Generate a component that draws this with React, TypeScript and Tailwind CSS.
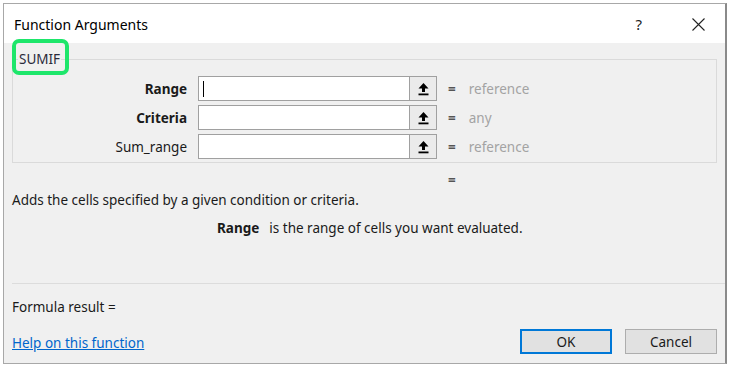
import React from "react";

function UploadIcon() {
  return (
    <svg width="13" height="14" viewBox="0 0 13 14">
      <path d="M6.5 1 L11.5 6.5 L8 6.5 L8 10 L5 10 L5 6.5 L1.5 6.5 Z" fill="#000" />
      <rect x="1.5" y="11.5" width="10" height="1.8" fill="#000" />
    </svg>
  );
}

function ArgRow({ label, bold, hint, caret }: { label: string; bold?: boolean; hint: string; caret?: boolean }) {
  return (
    <div className="flex items-center h-[25px]">
      <div className={"w-[174px] text-right text-[13.5px] text-[#1a1a1a] " + (bold ? "font-bold" : "")}>{label}</div>
      <div className="ml-[11px] flex h-[25px] w-[239px] border border-[#a0a0a0] bg-white">
        <div className="flex-1 flex items-center pl-[4px]">
          {caret && <div className="w-px h-[16px] bg-[#000]" />}
        </div>
        <div className="w-[27px] h-full flex items-center justify-center bg-[#ebebeb] border-l border-[#a0a0a0]">
          <UploadIcon />
        </div>
      </div>
      <div className="ml-[11px] text-[13.5px] text-[#555] font-bold">=</div>
      <div className="ml-[13px] text-[13.5px] text-[#a3a3a3]">{hint}</div>
    </div>
  );
}

export default function App() {
  return (
    <div
      className="w-[730px] h-[368px] bg-white overflow-hidden"
      style={{ fontFamily: '"Segoe UI", "Noto Sans", "Open Sans", sans-serif' }}
    >
      <div className="ml-[3px] mt-[3px] w-[724px] h-[361px] flex flex-col border-l border-t border-b border-[#a8a8a8] border-r-2 border-r-[#8a8a8a]">
        {/* title bar */}
        <div className="h-[39px] bg-white flex items-center pl-[10px] pr-[16px]">
          <div className="text-[14px] text-[#000] flex-1 pt-[2px]">Function Arguments</div>
          <div className="text-[15px] text-[#222] mr-[50px] pt-[2px]">?</div>
          <svg width="13" height="13" viewBox="0 0 13 13" className="mr-[4px] mt-[2px]">
            <path d="M0.5 0.5 L12.5 12.5 M12.5 0.5 L0.5 12.5" stroke="#222" strokeWidth="1.1" />
          </svg>
        </div>

        {/* body */}
        <div className="flex-1 bg-[#f0f0f0] relative text-[13.5px] leading-[16px] text-[#1a1a1a]">
          {/* group box */}
          <div className="relative ml-[8px] mt-[16px] w-[705px] h-[104px] border border-[#dadada]">
            <div className="absolute left-[5px] top-[-9px] bg-[#f0f0f0] px-[1px] text-[13.5px] leading-[16px] text-[#2a2a3a]">
              SUMIF
            </div>
            <div className="pt-[16px] flex flex-col gap-[4px]">
              <ArgRow label="Range" bold hint="reference" caret />
              <ArgRow label="Criteria" bold hint="any" />
              <ArgRow label="Sum_range" hint="reference" />
            </div>
          </div>

          {/* green highlight */}
          <div className="absolute left-[8px] top-[-4px] w-[57px] h-[36px] border-[4px] border-[#1ee66b] rounded-[7px]" />

          <div className="mt-[9px] pl-[444px] font-bold text-[#555]">=</div>
          <div className="mt-[4px] pl-[8px]">Adds the cells specified by a given condition or criteria.</div>
          <div className="mt-[12px] pl-[213px] flex">
            <span className="font-bold">Range</span>
            <span className="ml-[10px]">is the range of cells you want evaluated.</span>
          </div>

          <div className="mt-[47px] ml-[8px] h-px bg-[#dcdcdc]" />

          <div className="mt-[15px] pl-[8px]">Formula result =</div>

          <div className="mt-[14px] flex items-center pl-[8px] pr-[8px]">
            <a className="flex-1 text-[#0066cc] underline pt-[3px]">Help on this function</a>
            <div className="w-[92px] h-[25px] bg-[#e1e1e1] border-2 border-[#0078d7] flex items-center justify-center">
              OK
            </div>
            <div className="ml-[13px] w-[92px] h-[25px] bg-[#e1e1e1] border border-[#adadad] flex items-center justify-center">
              Cancel
            </div>
          </div>
        </div>
      </div>
    </div>
  );
}
